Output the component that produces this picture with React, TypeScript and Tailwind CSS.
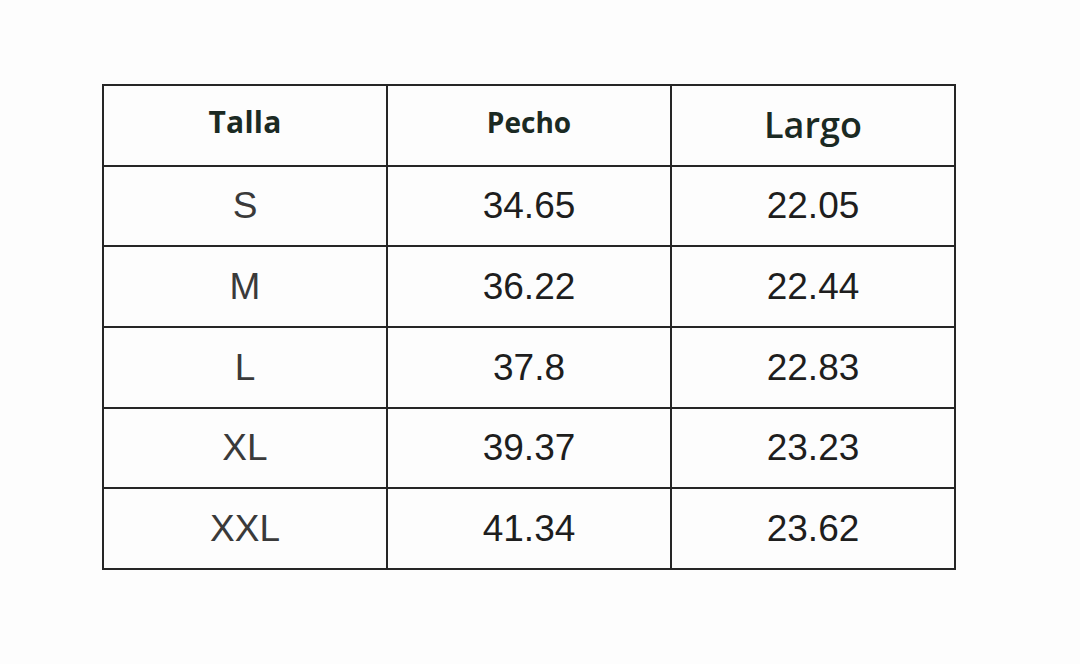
import React from "react";

const rows: [string, string, string][] = [
  ["S", "34.65", "22.05"],
  ["M", "36.22", "22.44"],
  ["L", "37.8", "22.83"],
  ["XL", "39.37", "23.23"],
  ["XXL", "41.34", "23.62"],
];

const heights = ["h-[80px]", "h-[81px]", "h-[81px]", "h-[80px]", "h-[81px]"];

export default function App() {
  return (
    <div className="w-[1080px] h-[664px] bg-[#fdfdfd] pt-[84px] pl-[102px]">
      <div className="w-[854px] border-l-2 border-t-2 border-[#262626] grid grid-cols-[284px_284px_284px]">
        <div className="h-[81px] border-r-2 border-b-2 border-[#262626] flex items-center justify-center pb-[9px]">
          <span className="text-[30px] font-bold text-[#1b2a23] tracking-[0.2px]" style={{ fontFamily: "'Open Sans', 'Noto Sans', sans-serif" }}>
            Talla
          </span>
        </div>
        <div className="h-[81px] border-r-2 border-b-2 border-[#262626] flex items-center justify-center pb-[8px]">
          <span className="text-[28px] font-bold text-[#1b2a23]" style={{ fontFamily: "'Open Sans', 'Noto Sans', sans-serif" }}>
            Pecho
          </span>
        </div>
        <div className="h-[81px] border-r-2 border-b-2 border-[#262626] flex items-center justify-center pb-[2px]">
          <span className="text-[36px] font-semibold text-[#1b2a23]" style={{ fontFamily: "'Open Sans', 'Noto Sans', sans-serif" }}>
            Largo
          </span>
        </div>
        {rows.map((r, i) =>
          r.map((c, j) => (
            <div
              key={`${i}-${j}`}
              className={`${heights[i]} border-r-2 border-b-2 border-[#262626] flex items-center justify-center`}
            >
              <span
                className={`text-[37px] ${j === 0 ? "text-[#3a3a3a]" : "text-[#1e1e1e]"}`}
                style={{ fontFamily: "'Liberation Sans', Arial, sans-serif" }}
              >
                {c}
              </span>
            </div>
          ))
        )}
      </div>
    </div>
  );
}
